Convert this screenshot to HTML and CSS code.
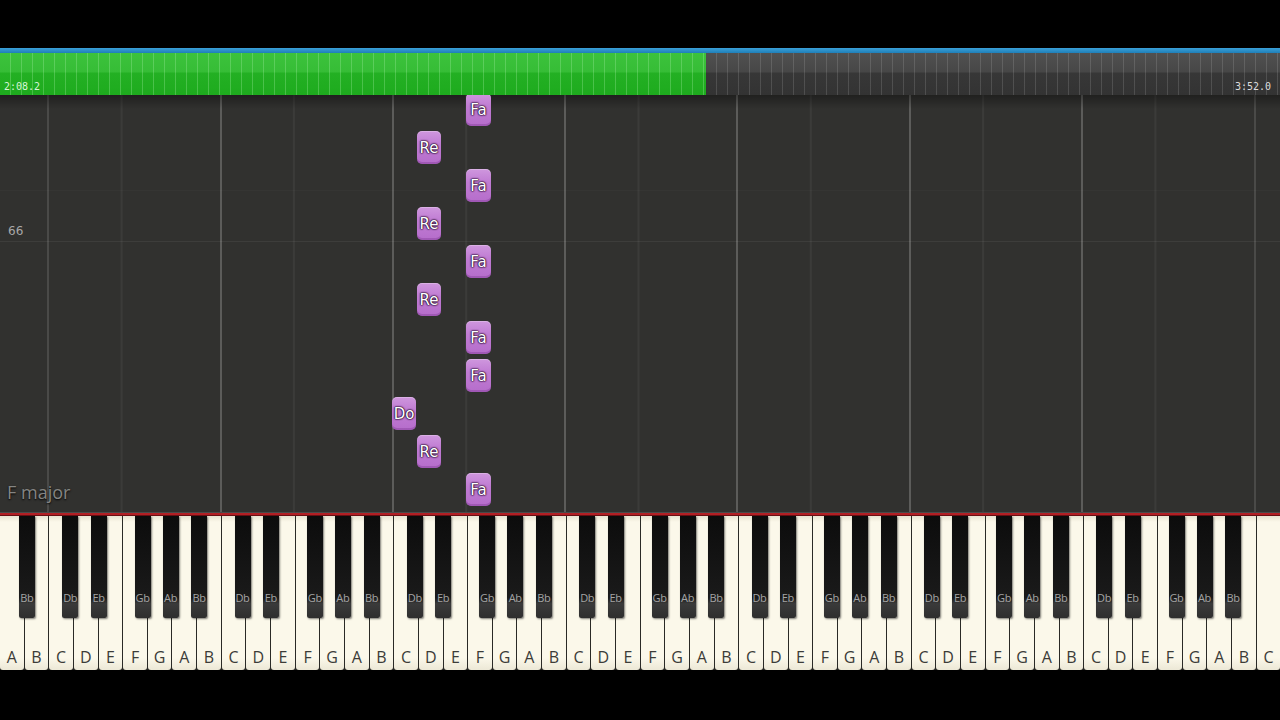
FILE: index.html
```html
<!DOCTYPE html>
<html>
<head>
<meta charset="utf-8">
<link rel="stylesheet" href="styles.css">
</head>
<body>
<div class="app">
  <div class="topbar"></div>
  <div class="blueline"></div>
  <div class="progress">
    <div class="played"></div>
    <div class="remaining"></div>
    <span class="time time-left">2:08.2</span>
    <span class="time time-right">3:52.0</span>
  </div>
  <div class="roll">
    <div class="hline h1"></div>
    <div class="hline h2"></div>
    <span class="tempo">66</span>
    <span class="keysig">F major</span>
    <div class="note fa" style="top:-2px">Fa</div>
    <div class="note re" style="top:36px">Re</div>
    <div class="note fa" style="top:74px">Fa</div>
    <div class="note re" style="top:112px">Re</div>
    <div class="note fa" style="top:150px">Fa</div>
    <div class="note re" style="top:188px">Re</div>
    <div class="note fa" style="top:226px">Fa</div>
    <div class="note fa" style="top:264px">Fa</div>
    <div class="note do" style="top:302px">Do</div>
    <div class="note re" style="top:340px">Re</div>
    <div class="note fa" style="top:378px">Fa</div>
  </div>
  <div class="redline"></div>
  <div class="keyboard">
    <div class="whites">
      <div class="wk"><span>A</span></div><div class="wk"><span>B</span></div>
      <div class="wk"><span>C</span></div><div class="wk"><span>D</span></div><div class="wk"><span>E</span></div><div class="wk"><span>F</span></div><div class="wk"><span>G</span></div><div class="wk"><span>A</span></div><div class="wk"><span>B</span></div>
      <div class="wk"><span>C</span></div><div class="wk"><span>D</span></div><div class="wk"><span>E</span></div><div class="wk"><span>F</span></div><div class="wk"><span>G</span></div><div class="wk"><span>A</span></div><div class="wk"><span>B</span></div>
      <div class="wk"><span>C</span></div><div class="wk"><span>D</span></div><div class="wk"><span>E</span></div><div class="wk"><span>F</span></div><div class="wk"><span>G</span></div><div class="wk"><span>A</span></div><div class="wk"><span>B</span></div>
      <div class="wk"><span>C</span></div><div class="wk"><span>D</span></div><div class="wk"><span>E</span></div><div class="wk"><span>F</span></div><div class="wk"><span>G</span></div><div class="wk"><span>A</span></div><div class="wk"><span>B</span></div>
      <div class="wk"><span>C</span></div><div class="wk"><span>D</span></div><div class="wk"><span>E</span></div><div class="wk"><span>F</span></div><div class="wk"><span>G</span></div><div class="wk"><span>A</span></div><div class="wk"><span>B</span></div>
      <div class="wk"><span>C</span></div><div class="wk"><span>D</span></div><div class="wk"><span>E</span></div><div class="wk"><span>F</span></div><div class="wk"><span>G</span></div><div class="wk"><span>A</span></div><div class="wk"><span>B</span></div>
      <div class="wk"><span>C</span></div><div class="wk"><span>D</span></div><div class="wk"><span>E</span></div><div class="wk"><span>F</span></div><div class="wk"><span>G</span></div><div class="wk"><span>A</span></div><div class="wk"><span>B</span></div>
      <div class="wk"><span>C</span></div>
    </div>
    <div class="bk" style="left:18.8px"><span>Bb</span></div>
    <div class="bk" style="left:62.2px"><span>Db</span></div>
    <div class="bk" style="left:90.6px"><span>Eb</span></div>
    <div class="bk" style="left:134.6px"><span>Gb</span></div>
    <div class="bk" style="left:162.6px"><span>Ab</span></div>
    <div class="bk" style="left:191.2px"><span>Bb</span></div>
    <div class="bk" style="left:234.5px"><span>Db</span></div>
    <div class="bk" style="left:262.9px"><span>Eb</span></div>
    <div class="bk" style="left:306.9px"><span>Gb</span></div>
    <div class="bk" style="left:334.9px"><span>Ab</span></div>
    <div class="bk" style="left:363.5px"><span>Bb</span></div>
    <div class="bk" style="left:406.8px"><span>Db</span></div>
    <div class="bk" style="left:435.2px"><span>Eb</span></div>
    <div class="bk" style="left:479.2px"><span>Gb</span></div>
    <div class="bk" style="left:507.2px"><span>Ab</span></div>
    <div class="bk" style="left:535.8px"><span>Bb</span></div>
    <div class="bk" style="left:579.2px"><span>Db</span></div>
    <div class="bk" style="left:607.6px"><span>Eb</span></div>
    <div class="bk" style="left:651.6px"><span>Gb</span></div>
    <div class="bk" style="left:679.6px"><span>Ab</span></div>
    <div class="bk" style="left:708.2px"><span>Bb</span></div>
    <div class="bk" style="left:751.5px"><span>Db</span></div>
    <div class="bk" style="left:779.9px"><span>Eb</span></div>
    <div class="bk" style="left:823.9px"><span>Gb</span></div>
    <div class="bk" style="left:851.9px"><span>Ab</span></div>
    <div class="bk" style="left:880.5px"><span>Bb</span></div>
    <div class="bk" style="left:923.8px"><span>Db</span></div>
    <div class="bk" style="left:952.2px"><span>Eb</span></div>
    <div class="bk" style="left:996.2px"><span>Gb</span></div>
    <div class="bk" style="left:1024.2px"><span>Ab</span></div>
    <div class="bk" style="left:1052.8px"><span>Bb</span></div>
    <div class="bk" style="left:1096.1px"><span>Db</span></div>
    <div class="bk" style="left:1124.5px"><span>Eb</span></div>
    <div class="bk" style="left:1168.5px"><span>Gb</span></div>
    <div class="bk" style="left:1196.5px"><span>Ab</span></div>
    <div class="bk" style="left:1225.1px"><span>Bb</span></div>
  </div>
</div>
</body>
</html>
```
FILE: styles.css
```css
html, body {
  margin: 0;
  padding: 0;
  background: #000;
}
.app {
  width: 1280px;
  height: 720px;
  display: flex;
  flex-direction: column;
  background: #000;
  overflow: hidden;
  font-family: "DejaVu Sans", sans-serif;
}
.topbar {
  height: 48px;
  background: #000;
  flex: none;
}
.blueline {
  height: 5px;
  flex: none;
  background: linear-gradient(#3aa0d8, #1f7fb8);
}
.progress {
  height: 42px;
  flex: none;
  display: flex;
  position: relative;
}
.played {
  width: 706px;
  background:
    repeating-linear-gradient(90deg, transparent 0 10px, rgba(170, 240, 170, 0.3) 10px 11px),
    linear-gradient(#3cc23c 0, #36bd36 19px, #23b023 20px, #1eab1e 100%);
}
.remaining {
  flex: 1;
  background:
    repeating-linear-gradient(90deg, transparent 0 10px, rgba(200, 200, 200, 0.18) 10px 11px),
    linear-gradient(#505050 0, #474747 19px, #373737 20px, #333 100%);
}
.time {
  position: absolute;
  top: 28px;
  font-family: "DejaVu Sans Mono", monospace;
  font-size: 10px;
  line-height: 12px;
}
.time-left {
  left: 4px;
  color: #d8f5d8;
}
.time-right {
  right: 9px;
  color: #dcdcdc;
}
.roll {
  height: 417px;
  flex: none;
  position: relative;
  overflow: hidden;
  background-color: #31312f;
  background-image:
    linear-gradient(rgba(0, 0, 0, 0.35), rgba(0, 0, 0, 0) 14px),
    linear-gradient(90deg, #4a4a48 0 2px, transparent 2px),
    linear-gradient(90deg, #5c5c5a 0 2px, transparent 2px),
    linear-gradient(90deg, #5c5c5a 0 2px, transparent 2px),
    linear-gradient(90deg, #5c5c5a 0 2px, transparent 2px),
    linear-gradient(90deg, #5c5c5a 0 2px, transparent 2px),
    linear-gradient(90deg, #5c5c5a 0 2px, transparent 2px),
    linear-gradient(90deg, #5c5c5a 0 2px, transparent 2px),
    linear-gradient(90deg, #4a4a48 0 2px, transparent 2px),
    linear-gradient(90deg, #3b3b39 0 2px, transparent 2px);
  background-size: 100% 100%, 4px 100%, 4px 100%, 4px 100%, 4px 100%, 4px 100%, 4px 100%, 4px 100%, 4px 100%, 172.3077px 100%;
  background-position: 0 0, 46.7px 0, 219.5px 0, 391.8px 0, 564.1px 0, 736.4px 0, 908.7px 0, 1081px 0, 1254.3px 0, 120.6px 0;
  background-repeat: no-repeat, no-repeat, no-repeat, no-repeat, no-repeat, no-repeat, no-repeat, no-repeat, no-repeat, repeat-x;
}
.hline {
  position: absolute;
  left: 0;
  right: 0;
  height: 1px;
}
.h1 {
  top: 95px;
  background: rgba(255, 255, 255, 0.025);
}
.h2 {
  top: 146px;
  background: rgba(255, 255, 255, 0.06);
}
.tempo {
  position: absolute;
  left: 8px;
  top: 129px;
  font-size: 12px;
  color: #a8a8a8;
}
.keysig {
  position: absolute;
  left: 7px;
  top: 385px;
  font-family: "Open Sans", sans-serif;
  font-size: 18px;
  color: #858583;
  text-shadow: 0 1px 2px #000;
}
.note {
  position: absolute;
  width: 25px;
  height: 33px;
  box-sizing: border-box;
  border-radius: 5px;
  background: linear-gradient(#cf97de, #c07cd3 40%, #b66dcb);
  box-shadow: inset 0 -2px 0 rgba(120, 50, 140, 0.35), inset 0 1px 0 rgba(255, 255, 255, 0.25);
  display: flex;
  align-items: center;
  justify-content: center;
  color: #fff;
  font-size: 15px;
  text-shadow: 0 0 2px #2a0d33, 0 0 2px #2a0d33, 0 0 1px #2a0d33, 0 0 1px #2a0d33;
}
.do { left: 392px; width: 24px; }
.re { left: 417px; width: 24px; }
.fa { left: 466px; }
.redline {
  height: 4px;
  flex: none;
  background: linear-gradient(#4a4a4a 0 1px, #b21f24 1px 3px, #6a1014 3px);
}
.keyboard {
  height: 154px;
  flex: none;
  position: relative;
}
.whites {
  display: flex;
  height: 100%;
  gap: 1px;
  background: #2a2a26;
}
.wk {
  flex: 1;
  background: linear-gradient(#e9e4d2 0, #fbf8ea 6px, #fbf8ea 92%, #ece8d6 100%);
  border-radius: 0 0 3px 3px;
  display: flex;
  align-items: flex-end;
  justify-content: center;
  padding-bottom: 3px;
  box-sizing: border-box;
}
.wk span {
  font-family: "Open Sans", sans-serif;
  font-size: 16px;
  line-height: 20px;
  color: #3c3c38;
}
.bk {
  position: absolute;
  top: 0;
  width: 16px;
  height: 102px;
  box-sizing: border-box;
  background: linear-gradient(#0c0c0c, #1a1a1a 80%, #3a3a3a 86%, #2e2e2e 100%);
  border-radius: 0 0 2px 2px;
  box-shadow: 1px 1px 2px rgba(0, 0, 0, 0.5);
  display: flex;
  justify-content: center;
  align-items: flex-start;
}
.bk span {
  margin-top: 76px;
  font-family: "Open Sans", sans-serif;
  font-size: 11px;
  line-height: 12px;
  color: #a4a4a4;
  letter-spacing: -0.3px;
}
```
